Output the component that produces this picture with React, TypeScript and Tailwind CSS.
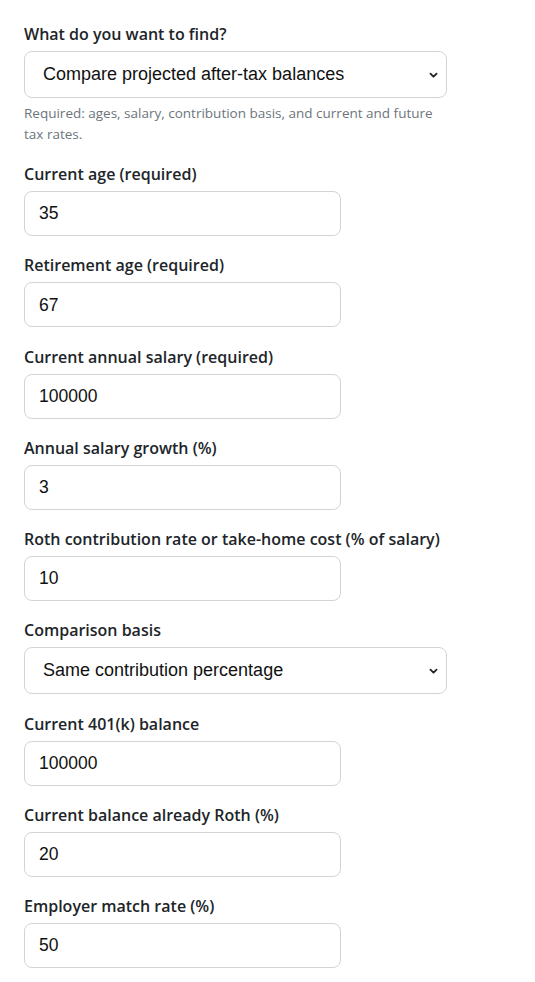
import React from 'react';

type Field = {
  label: string;
  value: string;
  kind?: 'input' | 'select';
};

const fields: Field[] = [
  { label: 'Current age (required)', value: '35' },
  { label: 'Retirement age (required)', value: '67' },
  { label: 'Current annual salary (required)', value: '100000' },
  { label: 'Annual salary growth (%)', value: '3' },
  { label: 'Roth contribution rate or take-home cost (% of salary)', value: '10' },
  { label: 'Comparison basis', value: 'Same contribution percentage', kind: 'select' },
  { label: 'Current 401(k) balance', value: '100000' },
  { label: 'Current balance already Roth (%)', value: '20' },
  { label: 'Employer match rate (%)', value: '50' },
];

function Chevron() {
  return (
    <svg width="9" height="9" viewBox="0 0 16 16" className="absolute right-[8px] top-1/2 -translate-y-1/2">
      <path d="M2.5 5.5l5.5 5.5 5.5-5.5" fill="none" stroke="#222" strokeWidth="3.2" strokeLinecap="round" strokeLinejoin="round" />
    </svg>
  );
}

function SelectBox({ value }: { value: string }) {
  return (
    <div className="relative flex h-[47px] w-[423px] items-center rounded-lg border border-[#d0d4d9] bg-white pl-[18px] text-[18px] text-[#111] [font-family:'Liberation_Sans',Arial,sans-serif]">
      {value}
      <Chevron />
    </div>
  );
}

function InputBox({ value }: { value: string }) {
  return (
    <div className="flex h-[45px] w-[317px] items-center rounded-lg border border-[#d0d4d9] bg-white pl-[14px] text-[17.5px] text-[#111] [font-family:'Liberation_Sans',Arial,sans-serif]">
      {value}
    </div>
  );
}

export default function App() {
  return (
    <div className="min-h-screen bg-white px-6 pt-[22px] text-[#212529] [font-family:'Open_Sans',sans-serif]">
      <div className="mb-[17px]">
        <label className="mb-[5px] block text-[16px] font-semibold leading-6">What do you want to find?</label>
        <SelectBox value="Compare projected after-tax balances" />
        <p className="mt-[5px] w-[416px] text-[13.5px] leading-[21px] text-[#6c757d]">
          Required: ages, salary, contribution basis, and current and future tax rates.
        </p>
      </div>
      {fields.map((f) => (
        <div key={f.label} className="mb-[17.25px]">
          <label className="mb-[5px] block text-[16px] font-semibold leading-6">{f.label}</label>
          {f.kind === 'select' ? <SelectBox value={f.value} /> : <InputBox value={f.value} />}
        </div>
      ))}
    </div>
  );
}
